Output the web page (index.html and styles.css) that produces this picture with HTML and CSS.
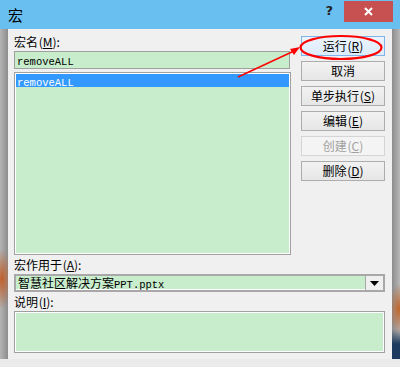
FILE: index.html
```html
<!DOCTYPE html>
<html lang="zh-CN">
<head>
    <meta charset="UTF-8">
    <title>宏</title>
    <link rel="stylesheet" href="styles.css">
</head>
<body>

<div class="window">
    <div class="titlebar">
        <span class="title">宏</span>
        <span class="help">?</span>
        <span class="close">
            <svg width="9" height="9" viewBox="0 0 9 9">
                <path d="M1 1 L8 8 M8 1 L1 8" stroke="#fff" stroke-width="2"/>
            </svg>
        </span>
    </div>

    <div class="frame">
        <div class="edge edge-left"></div>

        <div class="client">
            <div class="top">
                <div class="names">
                    <div class="caption">宏名 (<u>M</u>):</div>
                    <div class="field name-field"><span class="mono">removeALL</span></div>
                    <div class="listbox">
                        <div class="item selected"><span class="mono">removeALL</span></div>
                    </div>
                </div>

                <div class="buttons">
                    <button class="btn btn-default">运行 (<u>R</u>)</button>
                    <button class="btn">取消</button>
                    <button class="btn">单步执行 (<u>S</u>)</button>
                    <button class="btn">编辑 (<u>E</u>)</button>
                    <button class="btn" disabled>创建 (<u>C</u>)</button>
                    <button class="btn">删除 (<u>D</u>)</button>
                </div>
            </div>

            <div class="caption">宏作用于 (<u>A</u>):</div>
            <div class="combo">
                <span class="combo-text">智慧社区解决方案<span class="mono">PPT.pptx</span></span>
                <span class="combo-btn">
                    <svg width="9" height="5" viewBox="0 0 9 5"><path d="M0 0 H9 L4.5 5 Z" fill="#000"/></svg>
                </span>
            </div>

            <div class="caption caption-desc">说明 (<u>I</u>):</div>
            <div class="field desc"></div>
        </div>

        <div class="edge edge-right"></div>
    </div>

    <div class="bottom"></div>

    <!-- annotation drawn over the dialog -->
    <svg class="annotation" width="400" height="367" viewBox="0 0 400 367">
        <ellipse cx="341" cy="47.5" rx="40.5" ry="11.5" fill="none" stroke="#f00" stroke-width="2.2"/>
        <line x1="238" y1="77" x2="294" y2="51" stroke="#f00" stroke-width="1.4"/>
        <path d="M300 47 L290 49 L294 55 Z" fill="#f00"/>
    </svg>
</div>

</body>
</html>
```

FILE: styles.css
```css
* {
    box-sizing: border-box;
}

body {
    margin: 0;
    font-family: "Noto Sans CJK SC", "Liberation Sans", sans-serif;
    font-size: 12px;
    color: #000;
    background-color: #ebebeb;
}

.window {
    position: relative;
    width: 400px;
    height: 367px;
    display: flex;
    flex-direction: column;
    overflow: hidden;
}

/* BARRE DE TITRE */
.titlebar {
    height: 31px;
    background-color: #69bfef;
    display: flex;
    align-items: flex-start;
}

.title {
    font-size: 15px;
    line-height: 15px;
    margin: 7px 0 0 8px;
    flex: 1;
}

.help {
    font-family: "DejaVu Sans", sans-serif;
    font-weight: bold;
    font-size: 13px;
    line-height: 13px;
    color: #222;
    margin: 4px 11px 0 0;
}

.close {
    width: 49px;
    height: 21px;
    margin-top: 1px;
    margin-right: 7px;
    background-color: #c75050;
    display: flex;
    align-items: center;
    justify-content: center;
}

.frame {
    flex: 1;
    display: flex;
}

.edge {
    width: 8px;
}

.edge-left {
    background:
        radial-gradient(ellipse 10px 30px at 2px 250px, #c0602a, rgba(192, 96, 42, 0) 100%),
        linear-gradient(to right, #b4b4b4, #8c8c8c);
}

.edge-right {
    background:
        radial-gradient(ellipse 10px 25px at 7px 280px, #c0652a, rgba(192, 101, 42, 0) 100%),
        linear-gradient(to bottom, rgba(20, 50, 90, 0) 300px, #1d3b5e 315px),
        linear-gradient(to right, #8c8c8c, #b8b8b8);
}

.bottom {
    height: 8px;
    background-color: #ebebeb;
}

/* ZONE CLIENT */
.client {
    flex: 1;
    background-color: #f0f0f0;
    padding: 3px 7px 6px 6px;
    display: flex;
    flex-direction: column;
}

.top {
    display: flex;
    gap: 10px;
    height: 223px;
}

.names {
    flex: 1;
    display: flex;
    flex-direction: column;
}

.caption {
    height: 19px;
    line-height: 19px;
    white-space: nowrap;
    word-spacing: -2px;
}

.caption-desc {
    height: 19px;
}

.mono {
    font-family: "Liberation Mono", monospace;
    font-size: 10.5px;
}

.field {
    border: 1px solid #a0a0a0;
    background-color: #c7edcc;
}

.name-field {
    height: 18px;
    line-height: 16px;
    padding-left: 2px;
    margin-right: 1px;
}

.listbox {
    margin-top: 3px;
    flex: 1;
    border: 1px solid #a0a0a0;
    box-shadow: inset 0 0 0 1px #fff;
    background-color: #c7edcc;
    padding: 1px;
}

.item {
    height: 13px;
    line-height: 13px;
    padding-left: 1px;
}

.item.selected {
    background-color: #3399ff;
    color: #fff;
}

/* BOUTONS */
.buttons {
    width: 84px;
    padding-top: 4px;
    display: flex;
    flex-direction: column;
    gap: 5px;
}

.btn {
    height: 20px;
    padding: 0;
    font-family: inherit;
    font-size: 12px;
    line-height: 18px;
    color: #000;
    border: 1px solid #adadad;
    background: linear-gradient(to bottom, #f2f2f2, #e6e6e6);
    white-space: nowrap;
    word-spacing: -2px;
}

.btn-default {
    border-color: #7eb4ea;
    background: linear-gradient(to bottom, #ecf4fc, #dcecfc);
}

.btn:disabled {
    color: #a0a0a0;
    border-color: #d5d5d5;
    background: #f4f4f4;
}

/* LISTE DEROULANTE */
.combo {
    height: 18px;
    display: flex;
    border: 2px solid #a8a8a8;
    background-color: #c7edcc;
}

.combo-text {
    flex: 1;
    line-height: 14px;
    padding-left: 2px;
    border-bottom: 1px solid #fff;
    white-space: nowrap;
}

.combo-btn {
    width: 18px;
    border-left: 1px solid #a8a8a8;
    background-color: #efefef;
    display: flex;
    align-items: center;
    justify-content: center;
}

.desc {
    height: 42px;
    box-shadow: inset 0 0 0 1px #fff;
}

.annotation {
    position: absolute;
    top: 0;
    left: 0;
    pointer-events: none;
}
```
